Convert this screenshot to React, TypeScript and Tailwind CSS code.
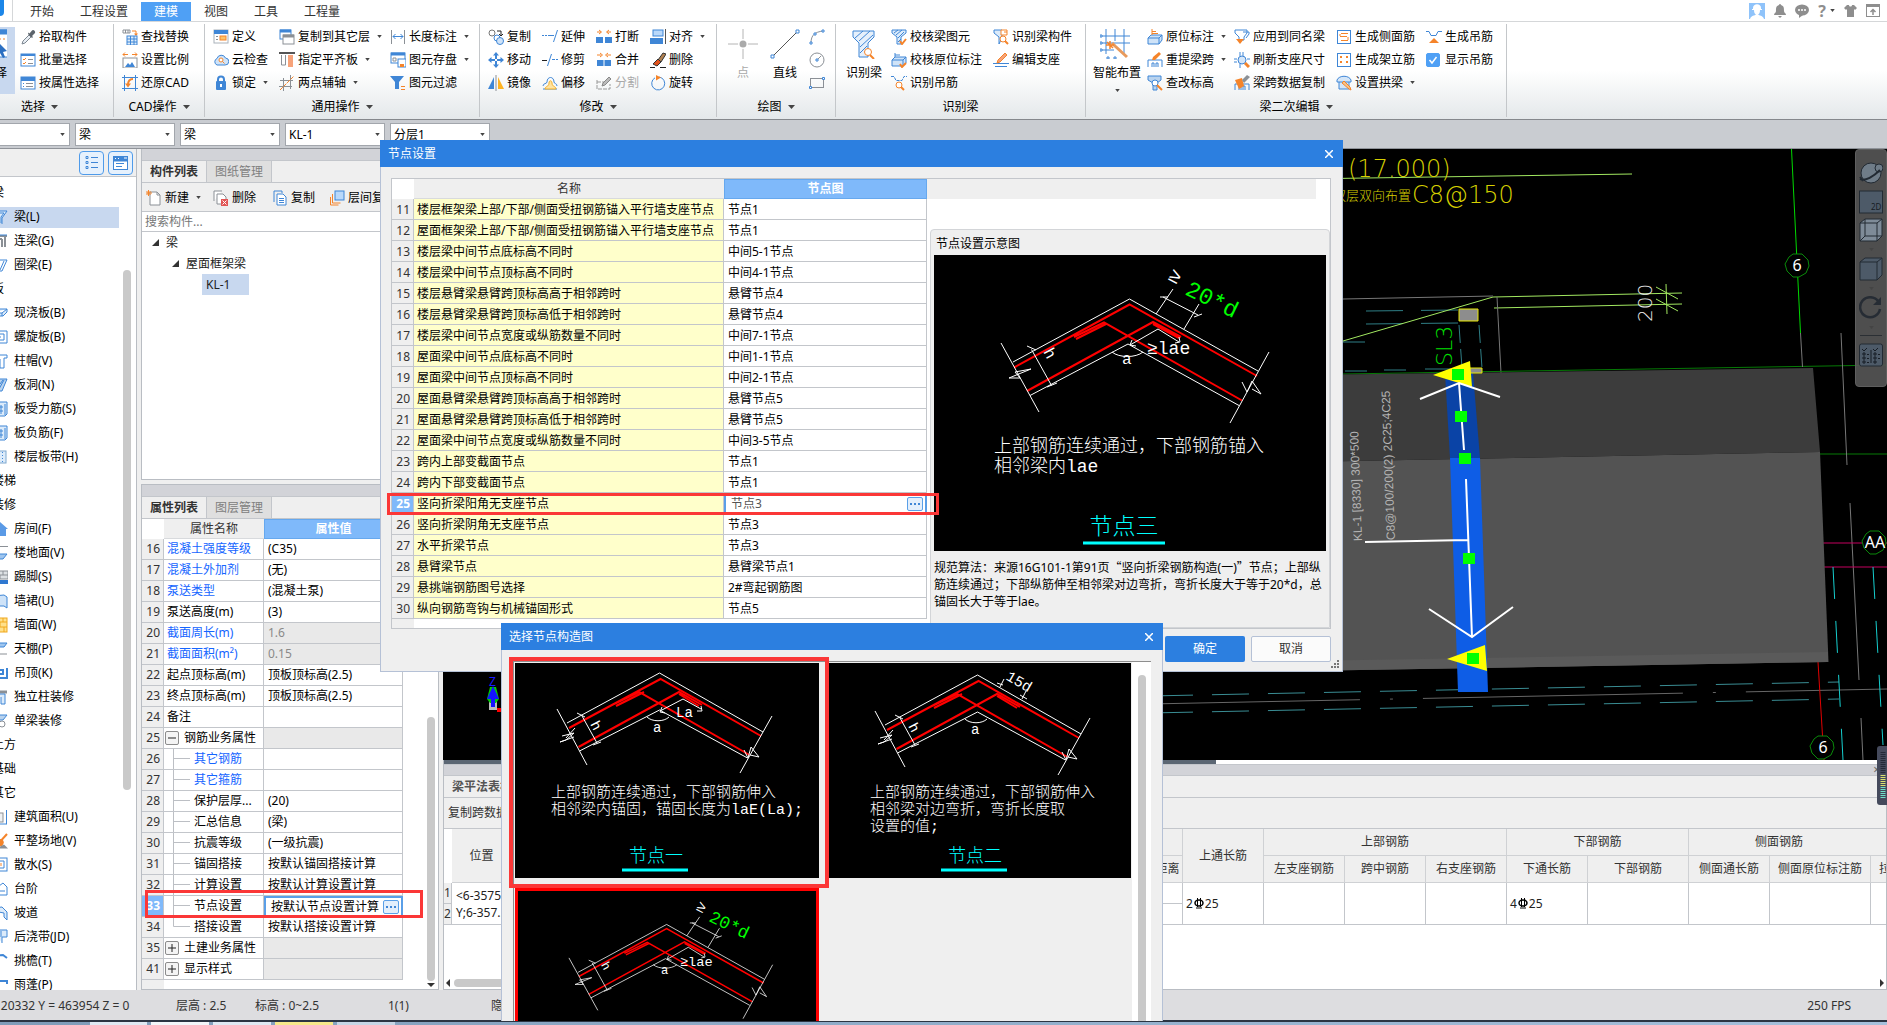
import React from 'react';

const B = '#3f86d6';
const O = '#f5842a';
const G = '#8b9096';

// 16x16 glyphs used by the ribbon, the tool bars and the component list
const glyphs: Record<string, React.ReactNode> = {
  pick: <><path d="M2 15l1-3 6-6 2 2-6 6z" fill="#e8eef4" stroke="#7d8791" /><path d="M8 5l4 4 1-1-1-1 3-3c1-2-2-4-3-2.500l-2.500 3-1-1z" fill="#5c646c" /></>,
  batch: <><rect x="1" y="2" width="14" height="12" fill="#fff" stroke={B} /><path d="M1 3h14" stroke={B} strokeWidth="2" /><path d="M3 7l1 1 2-2M3 11l1 1 2-2" stroke={O} fill="none" /><path d="M8 7.500h5M8 11.500h5" stroke={G} /></>,
  props: <><rect x="1" y="2" width="14" height="12" fill="#fff" stroke={B} /><path d="M1 4h14" stroke={B} strokeWidth="4" /><path d="M6 8.500h7M6 11.500h7" stroke={G} /><path d="M3 8.500h1M3 11.500h1" stroke={B} /></>,
  replace: <><path d="M1 1h7v3H1zM3.500 1v3M6 1v3" fill="#fff" stroke={G} /><path d="M10 2h4v4" stroke={O} fill="none" /><path d="M12 4.500l2 2.500 2-2.500" fill={O} /><rect x="5" y="7" width="10" height="9" fill="#dcecfb" stroke={B} /><path d="M5 10h10M5 13h10M8.500 7v9M12 7v9" stroke={B} /></>,
  ratio: <><path d="M1 2.500h5M10 2.500h5M3 0.500l-2 2 2 2M13 0.500l2 2-2 2" stroke={O} fill="none" /><rect x="1" y="6" width="14" height="10" fill="#fff" stroke={G} /><path d="M3 15l3-4 2 2 2-3 3 5z" fill={B} /></>,
  restore: <><path d="M0 2.500h16M0 13.500h16M2.500 0v16M13.500 0v16" stroke={B} /><path d="M11 4c-4 0-5 3-5 6" stroke={O} strokeWidth="2" fill="none" /><path d="M3 8.500h6l-3 4z" fill={O} /></>,
  define: <><rect x="1" y="1" width="14" height="13" fill="#fff" stroke="#aab2ba" /><path d="M1 3h14" stroke={B} strokeWidth="4" /><rect x="7" y="7" width="6" height="4" fill="#ffc266" stroke={O} /><path d="M3 7.500h2M3 10.500h2" stroke={G} /></>,
  cloud: <><path d="M4 13a3.500 3.500 0 010-6.500 4.500 4.500 0 018.500-.5A3.500 3.500 0 0112 13z" fill="#cfe3f8" stroke={B} /><circle cx="8" cy="8" r="2" fill="#fff" stroke={O} /><path d="M9.500 9.500l2 2" stroke={O} /></>,
  lock: <><path d="M5 7V4.500a3 3 0 016 0V7" fill="none" stroke={B} strokeWidth="2" /><rect x="3" y="6" width="10" height="9" rx="1" fill={B} /><path d="M8 9v3" stroke="#fff" strokeWidth="2" /></>,
  copyFloor: <><rect x="1" y="1" width="11" height="9" fill="#fff" stroke={B} /><path d="M1 2h11" stroke={B} strokeWidth="3" /><rect x="4" y="6" width="11" height="9" fill="#fff" stroke={G} /><path d="M4 7h11" stroke={G} strokeWidth="3" /></>,
  align: <><path d="M0 1h16" stroke="#555" strokeWidth="2" /><path d="M2.500 3v10h4V3" fill="#fff" stroke={G} /><rect x="9" y="3" width="5" height="12" fill="#f7a37a" /></>,
  axis: <><path d="M4.500 3v13M11.500 0v14M1 5.500h13M0 11.500h13" stroke={G} /><path d="M1 15L15 1" stroke={O} strokeDasharray="4 1" /></>,
  length: <><path d="M1.500 1v14M14.500 1v14" stroke={G} /><path d="M3 7.500h10M5.500 5L3 7.500 5.500 10M10.500 5L13 7.500 10.500 10" stroke={B} fill="none" /></>,
  save: <><rect x="1" y="1" width="14" height="10" fill="#fff" stroke={B} /><path d="M1 2h14" stroke={B} strokeWidth="3" /><path d="M3 6h3v3H3z" fill="none" stroke={G} /><rect x="8" y="7" width="8" height="8" fill="#fff" stroke={B} /><path d="M10 15v-3h4v3z" fill={O} /></>,
  filter: <><path d="M0 1h14L9 7v7H5V7z" fill={B} /><path d="M11 11.500h4M11 14.500h4" stroke={O} /></>,
  copy: <><circle cx="4" cy="4" r="3" fill="#fff" stroke="#777" /><path d="M9 2h4v4M11 5l2 2 2-2" stroke="#222" fill="none" /><circle cx="9" cy="9" r="3" fill="#fff" stroke={B} /><circle cx="12" cy="12" r="3.500" fill="#cfe3f8" stroke={B} /></>,
  move: <path d="M8 0l3 3.500H9V7h-2V3.500H5zM8 16l3-3.500H9V9h-2v3.500H5zM0 8l3.500-3v2H7v2H3.500v2zM16 8l-3.500-3v2H9v2h3.500v2z" fill={B} />,
  mirror: <><path d="M6 2v12H0z" fill={B} /><path d="M10 2v12h6z" fill="#ffb321" /><path d="M8 0v16" stroke={G} /></>,
  extend: <><path d="M0 6.500h8" stroke={B} strokeDasharray="2 1" /><path d="M8 6.500h4" stroke={B} /><path d="M15.500 1l-4 12" stroke={B} /></>,
  trim: <><path d="M0 8.500h5" stroke="#222" /><path d="M10 7.500h6" stroke={B} strokeDasharray="3 1" /><path d="M9.500 2l-4 12" stroke={B} /></>,
  offset: <><path d="M1 14h14M1 11c0-3 4-2 4-4 0-6 7-6 7 0 0 2 3 1 3 4" stroke={B} fill="none" /><path d="M3 14c0-3 4-2 4-6 0-3 3-3 3 0 0 4 4 3 4 6z" fill="#ffe3a0" stroke="#f5b12a" /></>,
  break: <><path d="M1 3h4M11 3h4M3 1l2.500 2L3 5M13 1l-2.500 2 2.500 2" stroke={O} fill="none" /><rect x="0" y="8" width="7" height="6" fill={B} /><rect x="9" y="8" width="7" height="6" fill={B} /></>,
  merge: <><path d="M1 3h4M11 3h4M4 1l2.500 2L4 5M12 1l-2.500 2 2.500 2" stroke={O} fill="none" /><rect x="1" y="8" width="14" height="6" fill={B} /><path d="M8 8v6" stroke="#fff" /></>,
  split: <><path d="M1 5v9h13V9M1 7h8" stroke="#999" fill="none" strokeDasharray="4 1" /><path d="M6 11l1-3 6-6 2 2-6 6z" fill="#bbb" stroke="#888" /></>,
  alignTo: <><rect x="3" y="1" width="10" height="6" fill="#b9d8fa" stroke={B} /><rect x="0" y="9" width="13" height="6" fill={B} /><path d="M15.500 0v15" stroke="#555" /></>,
  erase: <><path d="M8 8l5-7 3 1-5 8z" fill="#b08050" stroke="#333" /><path d="M3 12l5-5 3 3-4 4z" fill="#e2531c" stroke="#333" /><path d="M0 15.500h5M10 15.500h6" stroke="#222" /></>,
  rotate: <><path d="M9 2a6.500 6.500 0 11-4 .8" fill="none" stroke={B} /><path d="M6 0l5 2.500-5 3z" fill={O} /></>,
  arc: <><path d="M2 14C2 6 6 3 14 2" stroke={G} fill="none" /><path d="M1 13h2v2H1zM13 1h2v2h-2zM5 4h2v2H5z" fill="#fff" stroke={B} /></>,
  circle: <><circle cx="8" cy="8" r="7" fill="none" stroke={G} /><path d="M8 8l4-4" stroke={G} /><path d="M7 7h2v2H7z" fill="#fff" stroke={B} /></>,
  rect: <><rect x="1.500" y="3.500" width="13" height="9" fill="none" stroke={G} /><path d="M0.500 11.500h2v2h-2zM13.500 2.500h2v2h-2z" fill="#fff" stroke={B} /></>,
  check: <><path d="M1 1h14v3l-5 4v7H6V8L1 4z" fill="#dcebfa" stroke={B} /><path d="M3 4l4-3M5 6l6-5M7 9l6-6M7 13l3-3" stroke={B} /><path d="M9 12l2 3 4-5" stroke={O} strokeWidth="2" fill="none" /></>,
  checkPos: <><path d="M1 8l3-3h11v6l-3 3H1zM1 8h11v6M12 8l3-3" fill="#cfe3f8" stroke={B} /><path d="M4 5V1M4 3h5" stroke={B} /><path d="M9 12l2 3 4-4" stroke={O} strokeWidth="2" fill="none" /></>,
  findHanger: <><path d="M0 1.500h3l2 4h6l2-4h3" stroke={B} fill="none" strokeDasharray="3 1" /><circle cx="8" cy="10" r="3" fill="#fff" stroke={O} /><path d="M10 12l3 3" stroke={O} strokeWidth="2" /></>,
  findPart: <><path d="M1 1h8v8l-3 6V8L1 4z" fill="#dcebfa" stroke={B} /><path d="M8 1h6v5H8zM11 3h3" fill="#fff" stroke={O} /><circle cx="10" cy="10" r="3" fill="#fff" stroke={O} /><path d="M12 12l3 3" stroke={O} strokeWidth="2" /></>,
  editSupport: <><path d="M0 11.500h16M2 14.500h12" stroke={B} /><path d="M4 11l1-3 7-7 2 2-7 7z" fill="#f7a37a" stroke={O} /></>,
  place: <><path d="M1 9l3-3h11v5l-3 4H1zM1 9h11v6M12 9l3-3" fill="#cfe3f8" stroke={B} /><path d="M5 6V0M5 2.500h4M5 4.500h6" stroke={O} /></>,
  span: <><path d="M1 15V8h14v7M5 15v-4h2v4M9 15v-4h2v4" stroke={B} fill="none" /><path d="M5 8l1-3 6-5 2 2-6 6z" fill={O} /></>,
  level: <><path d="M1 1h13v4l-4 3v7H6V8L1 5z" fill="#b9d3ee" stroke={B} /><circle cx="8" cy="8" r="3" fill="#fff" stroke={B} /><path d="M10 10l5 5" stroke={O} strokeWidth="2" /></>,
  sameName: <><path d="M1 1h12v3l-3 4v3H5V8L1 4z" fill="#fff" stroke={B} /><path d="M2 10h8l-4 5z" fill={O} /><path d="M9 3h6v2l-3 4" stroke={B} fill="none" /></>,
  refresh: <><path d="M6 0v4M9 0v4M6 16v-4M0 7h3M0 10h3M16 7h-3" stroke={B} /><circle cx="8" cy="8" r="4" fill="#d5e6f8" stroke={B} /><path d="M11 11l4 4" stroke={O} strokeWidth="3" /></>,
  spanCopy: <><path d="M1 15V9h14v6M5 15v-4h2v4M9 15v-4h2v4" stroke={B} fill="none" /><path d="M1 5l7-2 2 8-5 3z" fill={O} /><path d="M8 5l5-5 3 2-6 6z" fill={G} /></>,
  sideBar: <><rect x="1.500" y="1.500" width="13" height="13" fill="#fff" stroke={B} /><path d="M5 4.500h7M4 7.500h7M5 11.500h7M4 5v2M12 8v3" stroke={O} /></>,
  standBar: <><rect x="1.500" y="1.500" width="13" height="13" fill="#fff" stroke={B} /><path d="M4 4h2v2H4zM10 4h2v2h-2zM4 9h2v2H4zM10 9h2v2h-2z" fill={O} /></>,
  arch: <><path d="M1 5c2-5 12-5 14 0v2H1zM3 7v7h10V7" fill="#d5e6f8" stroke={B} /><path d="M6 8l7 6 2 1-1-3-6-6z" fill="#f7c38a" stroke={O} /></>,
  hanger: <><path d="M0 2.500h3l2 4h5l2-4h4" stroke={B} fill="none" /><path d="M3 14l5-5 5 5z" fill={O} /></>,
  new: <><path d="M4 2h7l3 3v10H4z" fill="#fff" stroke={G} /><path d="M11 2v3h3" fill="none" stroke={G} /><path d="M2.500 0v6M0 3h6M0.500 1l4 4M4.500 1l-4 4" stroke={O} /></>,
  remove: <><path d="M1 11V1h8M4 14V4h6l3 3v7z" fill="#fff" stroke={G} /><rect x="8" y="9" width="7" height="7" fill="#e25555" /><path d="M9.500 10.500l4 4M13.500 10.500l-4 4" stroke="#fff" /></>,
  duplicate: <><path d="M2 12V1h8v2" fill="none" stroke={B} /><path d="M5 4h6l3 3v8H5z" fill="#fff" stroke={B} /><path d="M7 8.500h5M7 10.500h5M7 12.500h5" stroke={B} /></>,
  floorCopy: <><rect x="6" y="1" width="9" height="9" fill="#b9d8fa" stroke={B} /><path d="M3.500 4v9h8M1.500 7v8h8" stroke={O} fill="none" /></>,
  frame: <><path d="M1 3h14M13 4v10M10 6v8M3 6h7" stroke={G} fill="none" strokeWidth="2" /><path d="M1 2h14" stroke={B} /></>,
  funnel: <path d="M1 2h14l-5 7v6M3 4h9l-3 4v6" stroke={B} fill="#dcebfa" />,
  wedge: <path d="M1 3h14L10 14H6zM12 4L8 13" stroke={B} fill="#fff" />,
  slab: <path d="M1 6l3-2h11v3l-4 4H1zM1 8h9l5-4M10 8v3" stroke={B} fill="#dcebfa" />,
  spiral: <><path d="M1 2h14v12H1z" stroke={B} fill="#fff" /><path d="M4 5h8v6H7V8h2" stroke={B} fill="none" /></>,
  column: <path d="M1 2h14v3h-3v10H8V6H1z" stroke={B} fill="#fff" />,
  hatch: <><path d="M2 2h13l-5 12H6z" fill="#b9d3ee" stroke={B} /><path d="M7 12l5-9M8 7l3-4" stroke={B} /></>,
  mesh: <><path d="M2 3l3-2h10v12l-2 2H2z" fill="#dcebfa" stroke={B} /><path d="M13 3v11M9 4v9M6 6h5M6 10h5" stroke={B} /></>,
  strip: <><rect x="1" y="2" width="13" height="12" fill="#dcebfa" stroke="#7fa8cf" /><path d="M10.500 3v10" stroke={B} strokeDasharray="1 2" /></>,
  house: <path d="M8 1l8 7h-2v7H2V8H0z" fill="#5a9ae6" />,
  floor: <><path d="M0 1.500h16" stroke={G} /><path d="M1 9h14l-4 5H1z" fill="#9fc6ef" stroke={B} /></>,
  brick: <><path d="M0 2h16v8H0z" fill="#dde1e4" stroke={G} /><path d="M0 6h16M11 2v4M8 6v4" stroke={G} /><path d="M0 13h16" stroke="#2f78d0" strokeWidth="4" /></>,
  panel: <path d="M1 3l11-1 3 2v11l-3-2H1z" fill="#cfe3f8" stroke={B} />,
  yellowBrick: <><rect x="1" y="1" width="14" height="14" fill="#ffe08a" stroke="#f0a81c" /><path d="M1 5h14M1 10h14M11 1v4M8 5v5M12 10v5" stroke="#f0a81c" /></>,
  ceiling: <><path d="M1 5l4-3h10l-3 4H1z" fill="#9fc6ef" stroke={B} /><path d="M5 13h10" stroke={G} /></>,
  hook: <path d="M15 3v10H2V5h9v4H6" fill="none" stroke={B} strokeWidth="2" />,
  pillar: <><path d="M1 3h14" stroke={G} strokeWidth="3" /><path d="M4 5h9v10H9V8" fill="#dcebfa" stroke={B} /></>,
  beam: <><path d="M1 5l4-3h10l-4 5H1z" fill="#b9d3ee" stroke={B} /><circle cx="10" cy="11" r="3" fill="none" stroke={G} /></>,
  area: <><rect x="1" y="4" width="10" height="9" fill="#eef1f4" stroke={G} /><path d="M14.500 1v14M0 15h15" stroke={B} /></>,
  shovel: <><path d="M5 12l10-11" stroke={O} strokeWidth="2" /><path d="M8 6c4 0 5 4 2 7H5z" fill={O} /><path d="M4 15.500h12l-4-4" fill={G} /></>,
  water: <><rect x="1" y="1" width="14" height="13" fill="#fff" stroke={B} /><path d="M4 4h8v7H4z" fill="none" stroke={B} /><path d="M9 6v3" stroke={O} /></>,
  stairs: <path d="M1 8h6V5l4-3 4 4v8H1zM8 10h5" fill="#fff" stroke={B} />,
  ramp: <path d="M1 3l9-1 5 5v8l-3-3V8L1 6z" fill="#dcebfa" stroke={B} />,
  post: <path d="M1 1h14v7h-5v6M9 2v6" fill="#dcebfa" stroke={B} />,
  eave: <path d="M1 3l10-1 4 3" fill="none" stroke={B} strokeWidth="2" />,
  canopy: <path d="M1 4h14v3" fill="none" stroke={B} strokeWidth="2" />,
};

const Icon: React.FC<{ name: string }> = ({ name }) => (
  <svg className="h-4 w-4 shrink-0" viewBox="0 0 16 16" aria-hidden="true">{glyphs[name]}</svg>
);

const Caret: React.FC<{ className?: string }> = ({ className = '' }) => (
  <svg className={`h-[3px] w-[5px] shrink-0 ${className}`} viewBox="0 0 6 4" aria-hidden="true"><path d="M0 0h6L3 4z" fill="#444" /></svg>
);

interface ToolProps {
  icon: string;
  label: string;
  menu?: boolean;
  disabled?: boolean;
}

const Tool: React.FC<ToolProps> = ({ icon, label, menu, disabled }) => (
  <button type="button" disabled={disabled} className="flex h-[23px] items-center gap-[3px] whitespace-nowrap text-black disabled:text-[#a9a9a9]">
    <Icon name={icon} />
    {label}
    {menu && <Caret className="ml-1" />}
  </button>
);

const ToolColumn: React.FC<{ tools: ToolProps[]; className: string }> = ({ tools, className }) => (
  <div className={`flex shrink-0 flex-col ${className}`}>
    {tools.map(tool => <Tool key={tool.label} {...tool} />)}
  </div>
);

const RibbonGroup: React.FC<{ title: string; className: string; menu?: boolean; flush?: boolean; children: React.ReactNode }> = ({ title, className, menu = true, flush, children }) => (
  <>
    <section className={`flex shrink-0 flex-col pt-[3px] ${className}`}>
      <div className={`flex h-[69px] ${flush ? '' : 'pl-2'}`}>{children}</div>
      <div className="flex h-[25px] items-center justify-center gap-[6px]">
        {title}
        {menu && (
          <svg className="h-1 w-[7px]" viewBox="0 0 7 4" aria-hidden="true"><path d="M0 0h7L3.500 4z" fill="#444" /></svg>
        )}
      </div>
    </section>
    <div className="my-[2px] w-px shrink-0 bg-[#c4c7ca]"></div>
  </>
);

const tabs = ['开始', '工程设置', '建模', '视图', '工具', '工程量'];

const TitleTabs: React.FC = () => (
  <header className="flex h-[22px] shrink-0 items-end justify-between border-b border-[#d5d7d9] bg-white">
    <div className="flex items-end">
      <div className="h-[21px] w-[13px] border-r border-[#d5d7d9]">
        <div className="h-4 w-1 rounded-br-md bg-[#1c86e8]"></div>
      </div>
      <nav className="ml-1 flex">
        {tabs.map(tab => (
          <a key={tab} href="#" className={`h-[19px] px-[13px] leading-[20px] ${tab === '建模' ? 'bg-[#4fa0f5] text-white' : 'text-[#333]'}`}>{tab}</a>
        ))}
      </nav>
    </div>
    <div className="flex h-[21px] items-center gap-[9px] pr-[7px] text-[#8e8e8e]">
      <svg className="h-4 w-4" viewBox="0 0 16 16"><rect width="16" height="16" fill="#8fc3fa" /><path d="M4 5c0-5 8-5 8 0v1h1v1H3V6h1zM5 7h6c0 3-1 4-2 4.500 1 1 5 1 6 4.500H1c1-3.500 5-3.500 6-4.500C6 11 5 10 5 7z" fill="#fff" /></svg>
      <svg className="h-[14px] w-3" viewBox="0 0 12 14" fill="currentColor"><path d="M6 0c1 0 1 1 1 1 3 1 3 3 3 6 0 2 2 2 2 4H0c0-2 2-2 2-4 0-3 0-5 3-6 0 0 0-1 1-1zM4 12h4l-2 2z" /></svg>
      <svg className="h-[14px] w-[14px]" viewBox="0 0 14 14"><ellipse cx="7" cy="6" rx="7" ry="5.500" fill="currentColor" /><path d="M4 10v4l4-3z" fill="currentColor" /><path d="M3 6h2M6 6h2M9 6h2" stroke="#fff" strokeWidth="1.500" /></svg>
      <span className="flex items-center gap-1 text-base font-bold">?<Caret /></span>
      <svg className="h-3 w-[13px]" viewBox="0 0 13 12" fill="currentColor"><path d="M3 0h2c0 2 3 2 3 0h2l3 3-2 2-1-1v8H3V4L2 5 0 3z" /></svg>
      <svg className="h-[13px] w-[14px]" viewBox="0 0 14 13" fill="none" stroke="currentColor"><rect x=".5" y=".5" width="13" height="12" /><path d="M0 2h14" strokeWidth="2" /><path d="M7 11V6M4.500 8L7 5.500 9.500 8" strokeWidth="1.500" /></svg>
    </div>
  </header>
);

const Ribbon: React.FC = () => (
  <div className="flex h-[98px] shrink-0 overflow-hidden border-b border-[#85888c] bg-linear-to-b from-white via-white to-[#e4e8ea]">
    <RibbonGroup title="选择" className="-ml-[34px] w-[147px]" flush>
      <button type="button" className="mt-[2px] flex h-[67px] w-[49px] flex-col items-end justify-start gap-1 bg-[#c8d8ef] pt-[2px] pr-2">
        <svg className="h-8 w-6 shrink-0" viewBox="0 0 24 32" aria-hidden="true"><rect x="1" y="1" width="24" height="27" fill="#fff" stroke={B} /><path d="M1 3h24" stroke={B} strokeWidth="5" /><path d="M4 10h18" stroke={O} strokeDasharray="2 2" /><path d="M15 13l9 9-4 1 2 5-2 1-3-5-2 3z" fill="#2b6fc2" /></svg>
        选择
      </button>
      <ToolColumn className="ml-[5px]" tools={[{ icon: 'pick', label: '拾取构件' }, { icon: 'batch', label: '批量选择' }, { icon: 'props', label: '按属性选择' }]} />
    </RibbonGroup>
    <RibbonGroup title="CAD操作" className="w-[90px]">
      <ToolColumn className="" tools={[{ icon: 'replace', label: '查找替换' }, { icon: 'ratio', label: '设置比例' }, { icon: 'restore', label: '还原CAD' }]} />
    </RibbonGroup>
    <RibbonGroup title="通用操作" className="w-[274px]">
      <ToolColumn className="w-[66px]" tools={[{ icon: 'define', label: '定义' }, { icon: 'cloud', label: '云检查' }, { icon: 'lock', label: '锁定', menu: true }]} />
      <ToolColumn className="w-[111px]" tools={[{ icon: 'copyFloor', label: '复制到其它层', menu: true }, { icon: 'align', label: '指定平齐板', menu: true }, { icon: 'axis', label: '两点辅轴', menu: true }]} />
      <ToolColumn className="" tools={[{ icon: 'length', label: '长度标注', menu: true }, { icon: 'save', label: '图元存盘', menu: true }, { icon: 'filter', label: '图元过滤' }]} />
    </RibbonGroup>
    <RibbonGroup title="修改" className="w-[236px]">
      <ToolColumn className="w-[54px]" tools={[{ icon: 'copy', label: '复制' }, { icon: 'move', label: '移动' }, { icon: 'mirror', label: '镜像' }]} />
      <ToolColumn className="w-[54px]" tools={[{ icon: 'extend', label: '延伸' }, { icon: 'trim', label: '修剪' }, { icon: 'offset', label: '偏移' }]} />
      <ToolColumn className="w-[54px]" tools={[{ icon: 'break', label: '打断' }, { icon: 'merge', label: '合并' }, { icon: 'split', label: '分割', disabled: true }]} />
      <ToolColumn className="" tools={[{ icon: 'alignTo', label: '对齐', menu: true }, { icon: 'erase', label: '删除' }, { icon: 'rotate', label: '旋转' }]} />
    </RibbonGroup>
    <RibbonGroup title="绘图" className="w-[118px]">
      <button type="button" disabled className="flex w-9 flex-col items-center gap-[6px] pt-1 text-[#a9a9a9]">
        <svg className="h-[30px] w-[30px]" viewBox="0 0 30 30" aria-hidden="true"><path d="M0 15h30M15 0v30" stroke="#b4b4b4" /><circle cx="15" cy="15" r="5" fill="#fff" /><circle cx="15" cy="15" r="3.500" fill="#aaa" /></svg>
        点
      </button>
      <button type="button" className="ml-[6px] flex w-9 flex-col items-center gap-[6px] pt-1">
        <svg className="h-[30px] w-[30px]" viewBox="0 0 30 30" aria-hidden="true"><path d="M3 27L27 3" stroke="#555" /><path d="M1 26h3v3H1zM26 1h3v3h-3z" fill="#fff" stroke={B} /></svg>
        直线
      </button>
      <div className="ml-[6px] flex w-4 flex-col items-center">
        {['arc', 'circle', 'rect'].map(name => (
          <button key={name} type="button" aria-label={name} className="flex h-[23px] items-center"><Icon name={name} /></button>
        ))}
      </div>
    </RibbonGroup>
    <RibbonGroup title="识别梁" menu={false} className="w-[249px]">
      <button type="button" className="ml-[2px] flex w-[45px] flex-col items-start gap-[6px] pt-1">
        <svg className="ml-[6px] h-[30px] w-6" viewBox="0 0 24 30" aria-hidden="true"><path d="M1 2h21v6l-6 6v14H7V14L1 8z" fill="#e6f0fb" stroke={B} /><path d="M3 9l8-7M7 12L18 2M8 18L21 6M8 24l7-7" stroke={B} /><circle cx="16" cy="23" r="3.500" fill="#fff" stroke={O} /><path d="M18 26l4 4" stroke={O} strokeWidth="2" /></svg>
        识别梁
      </button>
      <ToolColumn className="w-[102px]" tools={[{ icon: 'check', label: '校核梁图元' }, { icon: 'checkPos', label: '校核原位标注' }, { icon: 'findHanger', label: '识别吊筋' }]} />
      <ToolColumn className="" tools={[{ icon: 'findPart', label: '识别梁构件' }, { icon: 'editSupport', label: '编辑支座' }]} />
    </RibbonGroup>
    <RibbonGroup title="梁二次编辑" className="w-[420px]">
      <button type="button" className="flex w-[53px] flex-col items-start gap-[6px] pt-1">
        <svg className="ml-[6px] h-[30px] w-[30px]" viewBox="0 0 30 30" aria-hidden="true"><path d="M6 0v25M15 0v12M24 0v24M0 7h30M0 14h30M0 21h14" stroke={B} fill="none" /><path d="M0 6h2v2H0zM0 13h2v2H0zM0 20h2v2H0zM7 28h2v2H7zM14 28h2v2h-2z" fill="#fff" stroke={B} /><path d="M12 14l3 3 12 11" stroke="#e89a5c" strokeWidth="3" /><path d="M10 12v8M6 16h8M7 13l6 6" stroke={O} strokeWidth="1.500" /></svg>
        <span className="-ml-px flex flex-col items-center gap-2 whitespace-nowrap">智能布置<Caret /></span>
      </button>
      <ToolColumn className="w-[87px]" tools={[{ icon: 'place', label: '原位标注', menu: true }, { icon: 'span', label: '重提梁跨', menu: true }, { icon: 'level', label: '查改标高' }]} />
      <ToolColumn className="w-[102px]" tools={[{ icon: 'sameName', label: '应用到同名梁' }, { icon: 'refresh', label: '刷新支座尺寸' }, { icon: 'spanCopy', label: '梁跨数据复制' }]} />
      <ToolColumn className="w-[90px]" tools={[{ icon: 'sideBar', label: '生成侧面筋' }, { icon: 'standBar', label: '生成架立筋' }, { icon: 'arch', label: '设置拱梁', menu: true }]} />
      <div className="flex flex-col">
        <Tool icon="hanger" label="生成吊筋" />
        <label className="flex h-[23px] items-center gap-[5px] whitespace-nowrap">
          <span className="grid h-[14px] w-[14px]">
            <input type="checkbox" defaultChecked className="peer col-start-1 row-start-1 h-[14px] w-[14px] appearance-none rounded-xs border border-[#4fa0f5] checked:bg-[#4fa0f5]" />
            <svg className="pointer-events-none col-start-1 row-start-1 hidden peer-checked:block" viewBox="0 0 14 14"><path d="M3.500 7l2.500 3 4.500-6" stroke="#fff" strokeWidth="1.500" fill="none" /></svg>
          </span>
          显示吊筋
        </label>
      </div>
    </RibbonGroup>
  </div>
);

const filters = [
  { name: '楼层', value: '首层' },
  { name: '构件类别', value: '梁' },
  { name: '构件类型', value: '梁' },
  { name: '构件', value: 'KL-1' },
  { name: '分层', value: '分层1' },
];

const FilterBar: React.FC = () => (
  <div className="flex h-[29px] shrink-0 items-start gap-[5px] overflow-hidden border-b border-[#8f9399] bg-[#c9ccd1] pt-[3px]">
    {filters.map((filter, i) => (
      <div key={filter.name} className={`grid h-[23px] w-[100px] shrink-0 items-center ${i === 0 ? '-ml-[30px]' : ''}`}>
        <select aria-label={filter.name} className="col-start-1 row-start-1 h-[23px] w-full appearance-none border border-[#a2a6ac] bg-white px-[3px] text-black">
          <option>{filter.value}</option>
        </select>
        <Caret className="pointer-events-none col-start-1 row-start-1 mr-[5px] justify-self-end" />
      </div>
    ))}
  </div>
);

const navItems: { label: string; icon?: string; active?: boolean }[] = [
  { label: '梁' },
  { label: '梁(L)', icon: 'funnel', active: true },
  { label: '连梁(G)', icon: 'frame' },
  { label: '圈梁(E)', icon: 'wedge' },
  { label: '板' },
  { label: '现浇板(B)', icon: 'slab' },
  { label: '螺旋板(B)', icon: 'spiral' },
  { label: '柱帽(V)', icon: 'column' },
  { label: '板洞(N)', icon: 'hatch' },
  { label: '板受力筋(S)', icon: 'mesh' },
  { label: '板负筋(F)', icon: 'mesh' },
  { label: '楼层板带(H)', icon: 'strip' },
  { label: '楼梯' },
  { label: '装修' },
  { label: '房间(F)', icon: 'house' },
  { label: '楼地面(V)', icon: 'floor' },
  { label: '踢脚(S)', icon: 'brick' },
  { label: '墙裙(U)', icon: 'panel' },
  { label: '墙面(W)', icon: 'yellowBrick' },
  { label: '天棚(P)', icon: 'ceiling' },
  { label: '吊顶(K)', icon: 'hook' },
  { label: '独立柱装修', icon: 'pillar' },
  { label: '单梁装修', icon: 'beam' },
  { label: '土方' },
  { label: '基础' },
  { label: '其它' },
  { label: '建筑面积(U)', icon: 'area' },
  { label: '平整场地(V)', icon: 'shovel' },
  { label: '散水(S)', icon: 'water' },
  { label: '台阶', icon: 'stairs' },
  { label: '坡道', icon: 'ramp' },
  { label: '后浇带(JD)', icon: 'post' },
  { label: '挑檐(T)', icon: 'eave' },
  { label: '雨蓬(P)', icon: 'canopy' },
];

const ComponentNav: React.FC = () => (
  <aside className="flex w-[137px] shrink-0 flex-col overflow-hidden border-r border-[#b9bdc3] bg-white">
    <div className="flex h-7 shrink-0 items-center justify-end gap-1 border-b border-[#c3c6cb] bg-[#efefef] pr-[3px]">
      <button type="button" aria-label="列表" className="flex h-6 w-[25px] items-center justify-center rounded-sm border border-[#4f9bea] bg-[#e6f1fd]">
        <svg className="h-[14px] w-[14px]" viewBox="0 0 14 14" fill="none" stroke={B}><path d="M1 .5h2v2H1zM1 5.500h2v2H1zM1 10.500h2v2H1zM6 1.500h7M6 6.500h7M6 11.500h7" /></svg>
      </button>
      <button type="button" aria-label="窗口" className="flex h-6 w-[25px] items-center justify-center rounded-sm border border-[#4f9bea] bg-[#e6f1fd]">
        <svg className="h-[14px] w-[15px]" viewBox="0 0 15 14" fill="none" stroke={B}><rect x=".5" y=".5" width="14" height="13" fill="#fff" /><path d="M0 3h15" strokeWidth="5" /><path d="M3 7.500h8M3 10.500h6" /><path d="M2 2.500h1M5 2.500h1M11 2l3 0" stroke="#fff" /></svg>
      </button>
    </div>
    <div className="flex min-h-0 flex-1 overflow-hidden pt-1">
      <ul className="w-[119px]">
        {navItems.map(item => (
          <li key={item.label} className="flex h-6 items-center">
            {item.icon ? (
              <a href="#" className={`flex h-[21px] w-full items-center gap-[6px] whitespace-nowrap ${item.active ? 'bg-[#c8d8ef]' : ''}`}>
                <span className="-ml-2 h-4"><Icon name={item.icon} /></span>
                {item.label}
              </a>
            ) : (
              <span className="-ml-2">{item.label}</span>
            )}
          </li>
        ))}
      </ul>
      <div className="mt-[89px] ml-1 h-[520px] w-2 rounded-full bg-[#c9c9c9]"></div>
    </div>
  </aside>
);

const PanelTabs: React.FC<{ items: string[] }> = ({ items }) => (
  <>
    <div className="h-3 shrink-0 border-b border-[#c3c6cb] bg-[#d2d3d8]"></div>
    <div className="flex h-[22px] shrink-0 border-b border-[#c3c6cb]">
      {items.map((item, i) => (
        <button key={item} type="button" className={`w-[65px] border-r border-[#c3c6cb] ${i === 0 ? 'font-bold text-[#333]' : 'bg-[#dfdfdf] text-[#808080]'}`}>{item}</button>
      ))}
    </div>
  </>
);

interface PropertyRow {
  no: number;
  name: string;
  value?: string;
  blue?: boolean;
  muted?: boolean;
  node?: '+' | '-';
  child?: 'mid' | 'last';
}

const properties: PropertyRow[] = [
  { no: 16, name: '混凝土强度等级', value: '(C35)', blue: true },
  { no: 17, name: '混凝土外加剂', value: '(无)', blue: true },
  { no: 18, name: '泵送类型', value: '(混凝土泵)', blue: true },
  { no: 19, name: '泵送高度(m)', value: '(3)' },
  { no: 20, name: '截面周长(m)', value: '1.6', blue: true, muted: true },
  { no: 21, name: '截面面积(m²)', value: '0.15', blue: true, muted: true },
  { no: 22, name: '起点顶标高(m)', value: '顶板顶标高(2.5)' },
  { no: 23, name: '终点顶标高(m)', value: '顶板顶标高(2.5)' },
  { no: 24, name: '备注' },
  { no: 25, name: '钢筋业务属性', node: '-', muted: true },
  { no: 26, name: '其它钢筋', blue: true, child: 'mid' },
  { no: 27, name: '其它箍筋', blue: true, child: 'mid' },
  { no: 28, name: '保护层厚...', value: '(20)', child: 'mid' },
  { no: 29, name: '汇总信息', value: '(梁)', child: 'mid' },
  { no: 30, name: '抗震等级', value: '(一级抗震)', child: 'mid' },
  { no: 31, name: '锚固搭接', value: '按默认锚固搭接计算', child: 'mid' },
  { no: 32, name: '计算设置', value: '按默认计算设置计算', child: 'mid' },
  { no: 33, name: '节点设置', value: '按默认节点设置计算', child: 'mid' },
  { no: 34, name: '搭接设置', value: '按默认搭接设置计算', child: 'last' },
  { no: 35, name: '土建业务属性', node: '+', muted: true },
  { no: 41, name: '显示样式', node: '+', muted: true },
];

const MoreButton: React.FC<{ label: string }> = ({ label }) => (
  <button type="button" aria-label={label} className="flex h-[14px] w-4 shrink-0 items-center justify-center rounded-xs border border-[#5aa0e8] bg-[#e3effc]">
    <svg className="h-[2px] w-[10px]" viewBox="0 0 10 2"><path d="M0 0h2v2H0zM4 0h2v2H4zM8 0h2v2H8z" fill={B} /></svg>
  </button>
);

const PropertyTable: React.FC = () => (
  <table className="w-[261px] table-fixed border-separate border-spacing-0">
    <colgroup><col className="w-[22px]" /><col className="w-[100px]" /><col /></colgroup>
    <thead>
      <tr className="h-5">
        <th className="bg-white"></th>
        <th className="border-b border-[#d8dadd] bg-[#efefef] font-normal text-[#333]">属性名称</th>
        <th className="border border-[#66a8ee] bg-[#7fb9fa] p-0 font-bold text-white">属性值</th>
      </tr>
    </thead>
    <tbody>
      {properties.map(row => {
        const selected = row.no === 33;
        return (
          <tr key={row.no} className="h-[21px]">
            <td className={`border-r border-b border-[#c3c6cb] p-0 pr-[3px] text-right ${selected ? 'bg-[#7fb9fa] font-bold text-white' : 'bg-[#efefef] text-[#333]'}`}>{row.no}</td>
            <td className="overflow-hidden border-r border-b border-[#c3c6cb] bg-white p-0 whitespace-nowrap">
              <div className={`flex h-5 items-center ${row.blue ? 'text-[#1565ff]' : 'text-black'} ${row.child ? 'pl-[9px]' : row.node ? 'pl-[1px]' : 'pl-[3px]'}`}>
                {row.child && (
                  <svg className="mr-1 h-5 w-[17px] shrink-0" viewBox="0 0 17 20" aria-hidden="true"><path d={row.child === 'last' ? 'M.5 0v9.500H17' : 'M.5 0v20M.5 9.500H17'} fill="none" stroke="#bcbfc4" /></svg>
                )}
                {row.node && (
                  <button type="button" aria-label={row.name} className="mr-[5px] h-[14px] w-[14px] shrink-0 rounded-xs border border-[#8c8c8c] bg-[#f4f4f4]">
                    <svg viewBox="0 0 12 12"><path d={row.node === '+' ? 'M2 6h8M6 2v8' : 'M2 6h8'} stroke="#222" /></svg>
                  </button>
                )}
                {row.name}
              </div>
            </td>
            <td className={`p-0 whitespace-nowrap ${row.muted ? 'bg-[#e9e9e9] text-[#8a8a8a]' : 'bg-white text-black'} ${selected ? 'border-2 border-[#5a9fe8]' : 'border-r border-b border-[#c3c6cb]'}`}>
              <div className={`flex items-center justify-between ${selected ? 'pr-[2px] pl-[5px]' : 'pl-[4px]'}`}>
                {row.value}
                {selected && <MoreButton label="节点设置" />}
              </div>
            </td>
          </tr>
        );
      })}
    </tbody>
  </table>
);

const SidePanels: React.FC = () => (
  <div className="flex w-[298px] shrink-0 flex-col">
    <section className="flex h-[331px] shrink-0 flex-col border border-t-0 border-[#b9bdc3]">
      <PanelTabs items={['构件列表', '图纸管理']} />
      <div className="flex h-[29px] shrink-0 items-center overflow-hidden border-b border-[#c3c6cb] pt-px pl-1 text-[#222]">
        <div className="w-[67px]"><Tool icon="new" label="新建" menu /></div>
        <div className="w-[59px]"><Tool icon="remove" label="删除" /></div>
        <div className="w-[57px]"><Tool icon="duplicate" label="复制" /></div>
        <Tool icon="floorCopy" label="层间复制" />
      </div>
      <input type="search" aria-label="搜索构件" placeholder="搜索构件..." className="h-5 shrink-0 border-b border-[#c3c6cb] bg-white px-[3px] placeholder:text-[#777]" />
      <div className="flex-1 bg-white text-[#222]">
        <div className="flex h-[21px] items-center gap-[7px] pl-[10px]">
          <svg className="h-[7px] w-[7px]" viewBox="0 0 7 7"><path d="M7 0v7H0z" fill="#333" /></svg>梁
        </div>
        <div className="flex h-[21px] items-center gap-[7px] pl-[30px]">
          <svg className="h-[7px] w-[7px]" viewBox="0 0 7 7"><path d="M7 0v7H0z" fill="#333" /></svg>屋面框架梁
        </div>
        <div className="ml-[60px] h-[21px] w-[47px] bg-[#c8d8ef] pl-1 leading-[21px]">KL-1</div>
      </div>
    </section>
    <section className="relative mt-1 flex min-h-0 flex-1 flex-col border border-[#b9bdc3]">
      <PanelTabs items={['属性列表', '图层管理']} />
      <div className="flex min-h-0 flex-1 justify-between bg-white">
        <div className="bg-linear-to-r from-[#efefef] from-[22px] to-white to-[22px]"><PropertyTable /></div>
        <div className="flex flex-col items-center justify-end pr-[3px] pb-[2px]">
          <div className="h-[264px] w-2 rounded-full bg-[#c9c9c9]"></div>
          <svg className="mt-[2px] h-1 w-2 shrink-0" viewBox="0 0 8 4" aria-hidden="true"><path d="M0 0h8L4 4z" fill="#333" /></svg>
        </div>
      </div>
      <div className="pointer-events-none absolute right-[15px] bottom-[71px] left-[3px] h-[28px] border-3 border-[#fb3737]"></div>
    </section>
  </div>
);

const ModelView: React.FC = () => (
  <div className="relative min-h-0 flex-1 overflow-hidden bg-black">
    <svg className="absolute inset-0 h-full w-full" viewBox="443 149 1444 611" preserveAspectRatio="xMaxYMin slice" fill="none" aria-label="三维模型">
      <g stroke="#2f7f86">
        <path d="M1366 311l92-1M1366 324l92-1" strokeDasharray="37 18" />
        <path d="M1343 344M1343 342l22-0M1345 371h22M1384 370h22M1425 369h40" />
        <path d="M1459 325l3 43M1479 325l3 43" strokeDasharray="18 6" />
        <path d="M1100 697L1839 682M1100 714l739-15" strokeDasharray="37 19" stroke="#3a8d94" />
      </g>
      <path d="M1100 705l787-16" stroke="#666" strokeDasharray="260 30 3 30" />
      <path d="M1300 179l332-5M1343 341l150-44 189-4M1494 308l188-4M1666 284l1 30M1656 287l22 12M1656 299l22 12" stroke="#a2e860" />
      <path d="M1343 299l150-3M1497 297l4 76" stroke="#777" />
      <path d="M1343 374l544-9M1820 454h67" stroke="#067a06" />
      <path d="M1791.500 149l9 184" stroke="#00d800" />
      <path d="M1800.500 333l2 34M1841 333l6 132M1850 503l9 177M1861 718l2 42" stroke="#777" />
      <path d="M1823 543h64M1824 567h63" stroke="#c4005e" />
      <path d="M1833 567l10 193M1873 567l10 178" stroke="#16cfcf" strokeDasharray="32 22" />
      <path d="M1818 662l6 98" stroke="#e00000" />
      <path d="M1300 375l513-7 7 84-520 10z" fill="#3c3c3c" />
      <path d="M1300 462l520-10 8.500 210L1300 671z" fill="#535353" />
      <path d="M1300 661l528-9v10l-528 9z" fill="#5a5a5a" />
      <path d="M1445 373h28l7 85h-30z" fill="#0a43a6" />
      <path d="M1450 458h30l8 234h-30z" fill="#0e5de6" />
      <path d="M1459 309h19v12h-19zM1464 368h18v5h-18z" fill="#8d8d8d" stroke="#e8e800" />
      <path d="M1433 375l37-14 2 26zM1447 659l38-14 2 26z" fill="#ffff00" />
      <path d="M1420 399l39-16 41 14M1459 383l5 67M1466 479l6 158M1429 609l43 28 41-30M1365 542l103-2" stroke="#fff" strokeWidth="2" />
      <path d="M1452 369h12v11h-12zM1455 411h12v11h-12zM1459 453h12v11h-12zM1463 553h12v11h-12zM1467 653h12v11h-12z" fill="#00ff00" />
      <g stroke="#0a8a0a" fill="#000">
        <path d="M1793 254h9l6 6 1 6-3 7-7 4h-6l-6-6-2-7 4-7zM1870 531h9l6 6 1 6-3 7-7 4h-6l-6-6-2-7 4-7zM1818 736h9l6 6 1 6-3 7-7 4h-6l-6-6-2-7 4-7z" />
      </g>
      <g fill="#fff" fontFamily="Noto Sans" fontSize="16" textAnchor="middle">
        <text x="1797" y="271">6</text>
        <text x="1823" y="753">6</text>
        <text x="1875" y="548">AA</text>
      </g>
      <g fill="#d6d000" fontFamily="DejaVu Sans, Noto Sans CJK SC" fontWeight="200">
        <text x="1348" y="177" fontSize="24">(17.000)</text>
        <text x="1333" y="200" fontSize="13">双层双向布置</text>
        <text x="1412" y="203" fontSize="24">C8@150</text>
      </g>
      <g fontFamily="DejaVu Sans" fontWeight="200">
        <text transform="translate(1452 366) rotate(-90)" fontSize="22" fill="#00e000">SL3</text>
        <text transform="translate(1652 322) rotate(-90)" fontSize="20" fill="#eee">200</text>
      </g>
      <g fill="#b5b5b5" fontFamily="Liberation Sans Narrow, Liberation Sans" fontSize="12">
        <text transform="translate(1362 541) rotate(-92)">KL-1 [8330] 300*500</text>
        <text transform="translate(1395 540) rotate(-92)">C8@100/200(2) 2C25;4C25</text>
      </g>
      <g>
        <path d="M489 710h8v-9h-8z" fill="#bbb" />
        <path d="M487 699l3-12h6l3 12-3 4h-6z" fill="#0c0" />
        <path d="M493 686l6 13h-4v8h-4v-8h-4z" fill="#1414ff" />
        <path d="M497 710h12" stroke="red" strokeWidth="4" />
        <text x="489" y="686" fill="#1a1aff" fontSize="12" fontFamily="Noto Sans">Z</text>
      </g>
    </svg>
    <div className="absolute top-0 right-0 flex h-[238px] w-8 flex-col items-center rounded-sm border border-[#5f5f5f] bg-[#565656]/90 pt-3">
      <svg className="h-6 w-6" viewBox="0 0 24 24"><circle cx="12" cy="11" r="10" fill="#6f7c88" stroke="#222a33" /><circle cx="20" cy="6" r="4" fill="#6f7c88" stroke="#222a33" /><path d="M1 17c5 3 14-3 20-9M1 15l3 4" stroke="#222a33" strokeWidth="2" fill="none" /></svg>
      <svg className="mt-1 h-6 w-6" viewBox="0 0 24 24"><rect x=".5" y="1" width="23" height="22" fill="#4d5a68" stroke="#222a33" /><text x="12" y="20" fontSize="8" fontFamily="Noto Sans" fill="#161c24">2D</text></svg>
      <svg className="mt-1 h-6 w-6" viewBox="0 0 24 24"><path d="M1 5l5-4h17v17l-5 5H1z" fill="#7e8b98" stroke="#222a33" /><path d="M1 5h17v18M18 5l5-4M6 1v17h17M1 23l5-5" stroke="#222a33" fill="none" /></svg>
      <Caret className="my-[6px]" />
      <svg className="h-6 w-6" viewBox="0 0 24 24"><path d="M1 5l5-4h17v17l-5 5H1z" fill="#4d5a68" stroke="#222a33" /><path d="M1 5h17v18M18 5l5-4" stroke="#222a33" fill="none" /></svg>
      <Caret className="my-[6px]" />
      <svg className="h-6 w-6" viewBox="0 0 24 24"><path d="M19 5a10 10 0 102 8" stroke="#262c34" strokeWidth="2.500" fill="none" /><path d="M22 1v8h-8z" fill="#262c34" /></svg>
      <Caret className="my-[6px]" />
      <div className="mb-[7px] h-px w-[22px] bg-[#2b2f34]"></div>
      <svg className="h-6 w-6" viewBox="0 0 24 24"><rect x=".5" y="1" width="23" height="22" rx="2" fill="#4d5a68" stroke="#222a33" /><path d="M3 6l2 2 3-3M14 6l2 2 3-3M12 7v13M4 10h2v2H4zM4 14h2v2H4zM4 18h2v2H4zM8 11.500h2M8 15.500h2M8 19.500h2M15 10h2v2h-2zM15 14h2v2h-2zM15 18h2v2h-2zM19 11.500h2M19 15.500h2" stroke="#161c24" fill="none" /></svg>
    </div>
  </div>
);

const Rebar: React.FC<{ count: number; size: number }> = ({ count, size }) => (
  <span className="flex items-center pl-[3px] text-[#222]">
    {count}
    <svg className="mx-px h-3 w-[10px]" viewBox="0 0 10 12" aria-label="C"><ellipse cx="5" cy="5" rx="4" ry="3" fill="none" stroke="#000" strokeWidth="1.500" /><path d="M3.500 0v9M6.500 0v9M2 10h6" stroke="#000" /></svg>
    {size}
  </span>
);

const th = 'border-r border-b border-[#cfd1d4] p-0 font-normal text-[#333] whitespace-nowrap';
const td = 'border-r border-b border-[#c3c6cb] bg-white p-0';

const BeamTable: React.FC = () => (
  <section className="flex h-[230px] shrink-0 flex-col border-x border-b border-[#b9bdc3] bg-[#efefef]">
    <div className="flex h-1 shrink-0 bg-white"><div className="w-[772px] bg-[#5b6673]"></div></div>
    <div className="flex h-3 shrink-0 items-center justify-end border-y border-[#c3c6cb] bg-[#d2d3d8] pr-[6px] text-[#666]">×</div>
    <div className="flex h-[22px] shrink-0 items-center border-b border-[#c3c6cb] pl-2 font-bold text-[#555]">梁平法表格</div>
    <div className="flex h-[31px] shrink-0 items-center border-b border-[#c3c6cb] pl-1 text-[#333]">
      <button type="button">复制跨数据</button>
    </div>
    <div className="min-h-0 flex-1 overflow-hidden bg-white">
      <table className="w-[calc(100%+64px)] table-fixed border-separate border-spacing-0 bg-[#efefef]">
        <colgroup>
          <col className="w-2" /><col className="w-[60px]" /><col /><col className="w-[30px]" /><col className="w-[81px]" /><col className="w-[81px]" /><col className="w-[81px]" /><col className="w-[81px]" /><col className="w-[81px]" /><col className="w-[101px]" /><col className="w-[81px]" /><col className="w-[101px]" /><col className="w-[79px]" />
        </colgroup>
        <thead>
          <tr className="h-[27px]">
            <th rowSpan={2} className="bg-white"></th>
            <th rowSpan={2} className={th}>位置</th>
            <th colSpan={2} className={th}></th>
            <th rowSpan={2} className={th}>上通长筋</th>
            <th colSpan={3} className={th}>上部钢筋</th>
            <th colSpan={2} className={th}>下部钢筋</th>
            <th colSpan={3} className={th}><span className="pr-20">侧面钢筋</span></th>
          </tr>
          <tr className="h-[27px]">
            <th className={th}></th>
            <th className={th}>距离</th>
            <th className={th}>左支座钢筋</th>
            <th className={th}>跨中钢筋</th>
            <th className={th}>右支座钢筋</th>
            <th className={th}>下通长筋</th>
            <th className={th}>下部钢筋</th>
            <th className={th}>侧面通长筋</th>
            <th className={th}>侧面原位标注筋</th>
            <th className={`${th} pl-2 text-left`}>拉筋</th>
          </tr>
        </thead>
        <tbody>
          <tr className="h-[21px]">
            <td className="border-r border-b border-[#c3c6cb] p-0 text-[#333]">1</td>
            <td rowSpan={2} className={`${td} pl-1 leading-[17px] whitespace-nowrap text-[#222]`}>&lt;6-3575<br />Y;6-357...</td>
            <td className={td}></td>
            <td className={td}></td>
            <td rowSpan={2} className={td}><Rebar count={2} size={25} /></td>
            <td rowSpan={2} className={td}></td>
            <td rowSpan={2} className={td}></td>
            <td rowSpan={2} className={td}></td>
            <td rowSpan={2} className={td}><Rebar count={4} size={25} /></td>
            <td rowSpan={2} className={td}></td>
            <td rowSpan={2} className={td}></td>
            <td rowSpan={2} className={td}></td>
            <td rowSpan={2} className={td}></td>
          </tr>
          <tr className="h-[21px]">
            <td className="border-r border-b border-[#c3c6cb] p-0 text-[#333]">2</td>
            <td className={td}></td>
            <td className={td}></td>
          </tr>
        </tbody>
      </table>
    </div>
    <div className="flex h-3 shrink-0 items-center gap-1 bg-white px-[2px]">
      <svg className="h-2 w-1" viewBox="0 0 4 8"><path d="M4 0v8L0 4z" fill="#333" /></svg>
      <div className="h-2 w-1/3 rounded-full bg-[#c9c9c9]"></div>
      <svg className="ml-auto h-2 w-1" viewBox="0 0 4 8"><path d="M0 0v8l4-4z" fill="#333" /></svg>
    </div>
  </section>
);

const cadFont = 'Liberation Mono, Noto Sans CJK SC, monospace';

interface SketchProps {
  title: string;
  lines: string[];
  mark: 'La' | '15d' | 'none';
}

// Bend detail, nodes one and two
const SmallSketch: React.FC<SketchProps> = ({ title, lines, mark }) => (
  <svg className="block h-[215px] w-[304px] bg-black" viewBox="0 0 304 215" fill="none" fontFamily={cadFont} aria-label={title}>
    <g transform={mark === '15d' ? 'translate(6 2)' : undefined}>
      <path d="M52 60l92.500-50L248 69M64.500 88l80-41 88 48" stroke="#fff" />
      <path d="M54 65l91.500-49L246 73M63.500 84L164 29l23 13M99 41l25-12 110.500 63M101 43l28-14M164 31l20 12" stroke="#f00" strokeWidth="2" />
      <path d="M42 46l30 56M257 53l-32 57M47 73l12-3-8 7-6 2 14-5M60 65l-9 10M229 87l4 8 3-11 8 10-9-2" stroke="#fff" />
      <path d="M66.500 52L82 80M62 50l8 4M78 82l8-3M132 54c5 5 17 5 22 0" stroke="#fff" />
      {mark === 'La' && <path d="M145 48l23-12 18 10M147 44l-2 5 5 1M182 48h5l-1-5" stroke="#fff" />}
      {mark === '15d' && <path d="M167 22l4-8M189 34l4-8M164 18l6 2M187 30l7 4" stroke="#fff" />}
      <g fill="#fff" fontSize="14">
        <text x="138" y="69">a</text>
        <text transform="translate(75 61) rotate(62)" y="0">h</text>
        {mark === 'La' && <text x="161" y="54">La</text>}
        {mark === '15d' && <text transform="translate(172 14) rotate(30)" fontSize="15">15d</text>}
      </g>
    </g>
    <g fill="#fff" fontSize="15" fontWeight="300">
      {lines.map((line, i) => <text key={line} x={mark === 'La' ? 36 : 43} y={134 + i * 17}>{line}</text>)}
    </g>
    <g transform={mark === '15d' ? 'translate(7 0)' : undefined}>
      <text x="141" y="199" fill="#00ffff" fontSize="18" fontWeight="300" textAnchor="middle">{title}</text>
      <path d="M107 207h66" stroke="#00ffff" strokeWidth="3" />
    </g>
  </svg>
);

// Bend detail, node three
const LargeSketch: React.FC<{ className: string }> = ({ className }) => (
  <svg className={`block bg-black ${className}`} viewBox="0 0 392 296" fill="none" fontFamily={cadFont} aria-label="节点三">
    <path d="M79 107l116.500-63L324 116M96 140.500l98-51.500L305 150.500" stroke="#fff" />
    <path d="M80 112.500l115.500-63L323 121M93 136l126-69 28 15M140 82l30-14.500 138 78M142 84l30-15M219 69l26 14" stroke="#f00" strokeWidth="2" />
    <path d="M67 88l38 69M335 97l-39 71M75 123l22-9-16 3 5 6-11 0M308 127l5 10 5-11 9 13-9-5" stroke="#fff" />
    <path d="M97.500 94.500l20 36M93 91l9 4M113 132l10-4M178 97c7 6 24 6 31 0M196 90l28-16 21 13M198 85l-2 5 6 1M241 88l5-1-1-5" stroke="#fff" />
    <path d="M222 59l17-25M250 74l15-25M229 42l35 18M226 42h8M260 62l8-3" stroke="#fff" />
    <g fill="#fff">
      <text x="188" y="109" fontSize="16">a</text>
      <text transform="translate(108 97) rotate(62)" y="-1" fontSize="16">h</text>
      <text x="213" y="99" fontSize="18">≥lae</text>
      <text transform="translate(233 24) rotate(28)" fontSize="20">≥</text>
    </g>
    <text transform="translate(250 39) rotate(26)" fontSize="23" fill="#00ff00">20*d</text>
    <g fill="#fff" fontSize="18" fontWeight="300">
      <text x="60" y="197">上部钢筋连续通过，下部钢筋锚入</text>
      <text x="60" y="217">相邻梁内lae</text>
    </g>
    <text x="190" y="279" fill="#00ffff" fontSize="23" fontWeight="300" textAnchor="middle">节点三</text>
    <path d="M149 288h82" stroke="#00ffff" strokeWidth="3" />
  </svg>
);

const DialogTitle: React.FC<{ title: string }> = ({ title }) => (
  <div className="flex h-[27px] shrink-0 items-center justify-between bg-[#2c7fe0] pr-[10px] pl-2 text-white">
    {title}
    <button type="button" aria-label="关闭">
      <svg className="h-2 w-2" viewBox="0 0 8 8"><path d="M0 0l8 8M8 0L0 8" stroke="#fff" strokeWidth="1.500" /></svg>
    </button>
  </div>
);

const nodeRows: [number, string, string][] = [
  [11, '楼层框架梁上部/下部/侧面受扭钢筋锚入平行墙支座节点', '节点1'],
  [12, '屋面框架梁上部/下部/侧面受扭钢筋锚入平行墙支座节点', '节点1'],
  [13, '楼层梁中间节点底标高不同时', '中间5-1节点'],
  [14, '楼层梁中间节点顶标高不同时', '中间4-1节点'],
  [15, '楼层悬臂梁悬臂跨顶标高高于相邻跨时', '悬臂节点4'],
  [16, '楼层悬臂梁悬臂跨顶标高低于相邻跨时', '悬臂节点4'],
  [17, '楼层梁中间节点宽度或纵筋数量不同时', '中间7-1节点'],
  [18, '屋面梁中间节点底标高不同时', '中间1-1节点'],
  [19, '屋面梁中间节点顶标高不同时', '中间2-1节点'],
  [20, '屋面悬臂梁悬臂跨顶标高高于相邻跨时', '悬臂节点5'],
  [21, '屋面悬臂梁悬臂跨顶标高低于相邻跨时', '悬臂节点5'],
  [22, '屋面梁中间节点宽度或纵筋数量不同时', '中间3-5节点'],
  [23, '跨内上部变截面节点', '节点1'],
  [24, '跨内下部变截面节点', '节点1'],
  [25, '竖向折梁阳角无支座节点', '节点3'],
  [26, '竖向折梁阴角无支座节点', '节点3'],
  [27, '水平折梁节点', '节点3'],
  [28, '悬臂梁节点', '悬臂梁节点1'],
  [29, '悬挑端钢筋图号选择', '2#弯起钢筋图'],
  [30, '纵向钢筋弯钩与机械锚固形式', '节点5'],
];

const NodeSettingsDialog: React.FC = () => (
  <div role="dialog" aria-label="节点设置" className="absolute top-[140px] left-[380px] z-10 flex w-[963px] flex-col">
    <DialogTitle title="节点设置" />
    <div className="border border-t-0 border-[#b5c1d6] bg-[#efefef] pt-[11px] pr-[11px] pb-[9px] pl-[10px]">
      <div className="relative flex h-[451px] border border-[#c3c6cb] bg-white">
        <div className="w-[535px] shrink-0 bg-linear-to-r from-[#efefef] from-[22px] to-white to-[22px]">
          <table className="w-full table-fixed border-separate border-spacing-0">
            <colgroup><col className="w-[22px]" /><col className="w-[310px]" /><col /></colgroup>
            <thead>
              <tr className="h-5">
                <th className="bg-white"></th>
                <th className="border-b border-[#d8dadd] bg-[#efefef] p-0 font-normal text-[#333]">名称</th>
                <th className="border border-[#66a8ee] bg-[#7fb9fa] p-0 font-bold text-white">节点图</th>
              </tr>
            </thead>
            <tbody>
              {nodeRows.map(([no, name, node]) => {
                const selected = no === 25;
                return (
                  <tr key={no} className="h-[21px]">
                    <td className={`border-r border-b border-[#c3c6cb] p-0 pt-px pr-[3px] text-right ${selected ? 'bg-[#7fb9fa] font-bold text-white' : 'bg-[#efefef] text-[#333]'}`}>{no}</td>
                    <td className="border-r border-b border-[#c3c6cb] bg-[#ffffcb] p-0 pt-px pl-[3px] whitespace-nowrap text-black">{name}</td>
                    <td className={`p-0 ${selected ? 'border-2 border-[#5a9fe8] text-[#555]' : 'border-r border-b border-[#c3c6cb] pt-px text-black'}`}>
                      <div className={`flex items-center justify-between ${selected ? 'pr-[2px] pl-[5px]' : 'pl-[4px]'}`}>
                        {node}
                        {selected && <MoreButton label="选择节点构造图" />}
                      </div>
                    </td>
                  </tr>
                );
              })}
            </tbody>
          </table>
        </div>
        <div className="flex min-w-0 flex-1 flex-col">
          <div className="mr-[14px] h-5 shrink-0 bg-[#efefef]"></div>
          <div className="mt-[30px] ml-[3px] flex flex-1 flex-col rounded-t-sm border border-[#d3d5d8] bg-[#efefef] px-[3px]">
            <h3 className="h-[25px] pl-[2px] leading-[27px]">节点设置示意图</h3>
            <LargeSketch className="h-[296px] w-[392px]" />
            <p className="pt-[7px] leading-[17px] whitespace-nowrap text-black">
              规范算法：来源16G101-1第91页<span className="font-['Noto_Sans_CJK_SC',sans-serif]">“</span>竖向折梁钢筋构造(一)<span className="font-['Noto_Sans_CJK_SC',sans-serif]">”</span>节点；上部纵<br />
              筋连续通过；下部纵筋伸至相邻梁对边弯折，弯折长度大于等于20*d，总<br />
              锚固长大于等于lae。
            </p>
          </div>
        </div>
        <div className="pointer-events-none absolute top-[314px] -left-[5px] h-[22px] w-[552px] border-3 border-[#fb3737]"></div>
      </div>
      <div className="mt-[7px] flex justify-end gap-[6px]">
        <button type="button" className="h-[26px] w-20 rounded-xs bg-[#2c7fe0] text-white">确定</button>
        <button type="button" className="h-[26px] w-20 rounded-xs border border-[#b5c1d6] bg-[#fbfbfb] text-[#333]">取消</button>
      </div>
    </div>
    <svg className="absolute right-1 bottom-1 h-2 w-2" viewBox="0 0 8 8" aria-hidden="true"><path d="M6 0h2v2H6zM3 3h2v2H3zM6 3h2v2H6zM0 6h2v2H0zM3 6h2v2H3zM6 6h2v2H6z" fill="#777" /></svg>
  </div>
);

const SketchPickerDialog: React.FC = () => (
  <div role="dialog" aria-label="选择节点构造图" className="absolute top-[623px] bottom-1 left-[501px] z-20 flex w-[662px] flex-col overflow-hidden">
    <DialogTitle title="选择节点构造图" />
    <div className="min-h-0 flex-1 overflow-hidden border-x border-[#b5c1d6] bg-[#efefef] px-[11px] pt-[11px]">
      <div className="flex h-full justify-between border-t border-l border-[#8e8e8e]">
        <div className="grid grid-cols-[304px_304px] content-start gap-x-2 gap-y-[10px] pt-px pl-px">
          <div className="relative">
            <SmallSketch title="节点一" mark="La" lines={['上部钢筋连续通过，下部钢筋伸入', '相邻梁内锚固，锚固长度为laE(La);']} />
            <div className="pointer-events-none absolute -top-[6px] -right-[10px] -bottom-[10px] -left-[6px] z-10 border-4 border-[#fb3737]"></div>
          </div>
          <SmallSketch title="节点二" mark="15d" lines={['上部钢筋连续通过，下部钢筋伸入', '相邻梁对边弯折，弯折长度取', '设置的值;']} />
          <div className="border-3 border-[#f00]"><LargeSketch className="h-[225px] w-[298px]" /></div>
        </div>
        <div className="flex w-[19px] justify-center bg-white pt-[13px]">
          <div className="w-2 rounded-t-full bg-[#c9c9c9]"></div>
        </div>
      </div>
    </div>
  </div>
);

const App: React.FC = () => (
  <div className="relative flex h-screen w-full flex-col overflow-hidden bg-[#efefef] font-['Noto_Sans','Noto_Sans_CJK_SC',sans-serif] text-xs text-black">
    <TitleTabs />
    <Ribbon />
    <FilterBar />
    <main className="flex min-h-0 flex-1">
      <ComponentNav />
      <div className="w-1 shrink-0"></div>
      <SidePanels />
      <div className="ml-1 flex min-w-0 flex-1 flex-col">
        <ModelView />
        <BeamTable />
      </div>
    </main>
    <footer className="flex h-[30px] shrink-0 items-center overflow-hidden bg-[#dddde0] pt-[2px] pr-9 whitespace-nowrap text-[#333]">
      <span className="-ml-[6px] w-[182px] shrink-0">120332 Y = 463954 Z = 0</span>
      <span className="w-[79px] shrink-0">层高 : 2.5</span>
      <span className="w-[133px] shrink-0">标高 : 0~2.5</span>
      <span className="w-[103px] shrink-0">1(1)</span>
      <span>隐藏</span>
      <span className="ml-auto">250 FPS</span>
    </footer>
    <div className="flex h-[5px] shrink-0 gap-1 border-t-2 border-[#2b3442] bg-linear-to-r from-[#7f9cb9] to-[#a5c0dc] pl-[90px]">
      <div className="w-[57px] bg-[#dfe9f3]"></div>
      <div className="w-[58px] bg-[#f2f6fa]"></div>
      <div className="w-[58px] bg-[#dfe9f3]"></div>
      <div className="w-[58px] bg-[#f7e88a]"></div>
      <div className="w-[58px] bg-[#c6d6e6]"></div>
    </div>
    <NodeSettingsDialog />
    <SketchPickerDialog />
    <svg className="absolute top-[746px] right-0 z-10 h-[59px] w-[10px]" viewBox="0 0 10 59" aria-hidden="true">
      <rect width="14" height="59" rx="3" fill="#454a5c" />
      <path d="M6 6v22" stroke="#252a38" strokeWidth="5" strokeDasharray="1 1" />
      <path d="M6 29v12" stroke="#d8e070" strokeWidth="5" strokeDasharray="1 1" />
      <path d="M6 41v12" stroke="#6fe0c8" strokeWidth="5" strokeDasharray="1 1" />
    </svg>
  </div>
);

export default App;
